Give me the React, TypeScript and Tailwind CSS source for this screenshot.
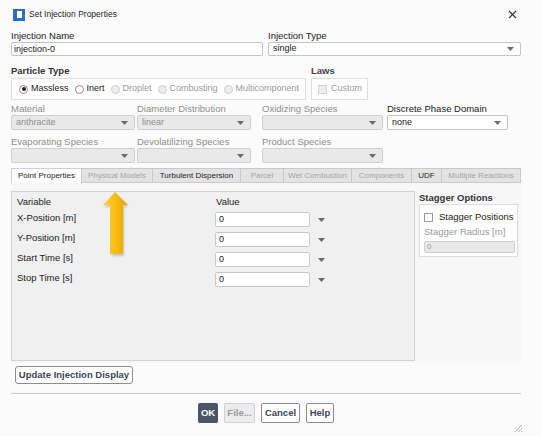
import React from 'react';

const font = { fontFamily: '"Liberation Sans", Arial, sans-serif' };

const Caret = ({ className = '' }: { className?: string }) => (
  <svg width="7" height="4" viewBox="0 0 7 4" className={className}>
    <path d="M0 0h7L3.5 4z" fill="#6b6b6b" />
  </svg>
);

const Select = ({ value, width, disabled }: { value?: string; width: string; disabled?: boolean }) => (
  <div
    className={`${width} h-[15px] flex items-center justify-between pl-[4px] pr-[6px] rounded-[2px] border text-[9px] ${
      disabled ? 'bg-[#e9e9e9] border-[#cfcfcf] text-[#8e8e8e]' : 'bg-white border-[#c4c4c4] text-[#222]'
    }`}
  >
    <span>{value}</span>
    <Caret />
  </div>
);

const Radio = ({ label, checked, disabled }: { label: string; checked?: boolean; disabled?: boolean }) => (
  <div className="flex items-center gap-[3px]">
    <span
      className={`w-[9px] h-[9px] rounded-full border flex items-center justify-center ${
        disabled ? 'border-[#cfcfcf] bg-[#ececec]' : 'border-[#8a8a8a] bg-white'
      }`}
    >
      {checked && <span className="w-[4px] h-[4px] rounded-full bg-[#222]" />}
    </span>
    <span className={disabled ? 'text-[#9a9a9a]' : 'text-[#222]'}>{label}</span>
  </div>
);

const tabs = [
  { name: 'Point Properties', w: 'w-[70px]', active: true },
  { name: 'Physical Models', w: 'w-[71px]', dim: true },
  { name: 'Turbulent Dispersion', w: 'w-[88px]' },
  { name: 'Parcel', w: 'w-[43px]', dim: true },
  { name: 'Wet Combustion', w: 'w-[68px]', dim: true },
  { name: 'Components', w: 'w-[60px]', dim: true },
  { name: 'UDF', w: 'w-[30px]' },
  { name: 'Multiple Reactions', w: 'w-[80px]', dim: true },
];

const rows = ['X-Position [m]', 'Y-Position [m]', 'Start Time [s]', 'Stop Time [s]'];

export default function App() {
  return (
    <div className="relative w-[542px] h-[436px] bg-[#fbfbfb] overflow-hidden" style={font}>
      {/* title bar */}
      <div className="h-[29px] flex items-center pl-[13px] pr-[25px]">
        <div className="w-[12px] h-[12px] bg-[#2c6fc0] flex items-center justify-center">
          <div className="w-[5px] h-[7px] bg-white" />
        </div>
        <span className="ml-[4px] text-[8.5px] text-[#222]">Set Injection Properties</span>
        <span className="ml-auto">
          <svg width="9" height="9" viewBox="0 0 9 9">
            <path d="M1 1l7 7M8 1L1 8" stroke="#333" strokeWidth="1.1" />
          </svg>
        </span>
      </div>

      <div className="pl-[11px] w-[521px]">
        {/* name / type */}
        <div className="flex gap-[5px]">
          <div className="w-[252px]">
            <div className="h-[13px] leading-[13px] text-[9.5px] text-[#222]">Injection Name</div>
            <div className="h-[14px] border border-[#c4c4c4] rounded-[2px] bg-white pl-[2px] text-[9px] leading-[12px] text-[#222]">
              injection-0
            </div>
          </div>
          <div className="w-[253px]">
            <div className="h-[13px] leading-[13px] text-[9.5px] text-[#222]">Injection Type</div>
            <Select value="single" width="w-[253px] !h-[14px]" />
          </div>
        </div>

        {/* particle type / laws */}
        <div className="flex gap-[5px] mt-[8px]">
          <div>
            <div className="h-[13px] leading-[13px] text-[9.5px] font-bold text-[#333]">Particle Type</div>
            <div className="mt-[1px] w-[295px] h-[22px] border border-[#dedede] bg-white flex items-center gap-[6px] pl-[7px] text-[9px]">
              <Radio label="Massless" checked />
              <Radio label="Inert" />
              <Radio label="Droplet" disabled />
              <Radio label="Combusting" disabled />
              <Radio label="Multicomponent" disabled />
            </div>
          </div>
          <div>
            <div className="h-[13px] leading-[13px] text-[9.5px] font-bold text-[#444]">Laws</div>
            <div className="mt-[1px] w-[57px] h-[22px] border border-[#dedede] bg-white flex items-center gap-[4px] pl-[6px] text-[9px] text-[#9a9a9a]">
              <span className="w-[9px] h-[9px] border border-[#cfcfcf] bg-[#ececec]" />
              Custom
            </div>
          </div>
        </div>

        {/* material row */}
        <div className="flex mt-[2px] text-[9.5px]">
          <div className="w-[126px]">
            <div className="h-[13px] leading-[13px] text-[#8e8e8e]">Material</div>
            <Select value="anthracite" width="w-[124px]" disabled />
          </div>
          <div className="w-[125px]">
            <div className="h-[13px] leading-[13px] text-[#8e8e8e]">Diameter Distribution</div>
            <Select value="linear" width="w-[114px]" disabled />
          </div>
          <div className="w-[125px]">
            <div className="h-[13px] leading-[13px] text-[#8e8e8e]">Oxidizing Species</div>
            <Select width="w-[121px]" disabled />
          </div>
          <div className="flex-1">
            <div className="h-[13px] leading-[13px] text-[#222]">Discrete Phase Domain</div>
            <Select value="none" width="w-[121px]" />
          </div>
        </div>

        <div className="flex mt-[5px] text-[9.5px]">
          <div className="w-[126px]">
            <div className="h-[13px] leading-[13px] text-[#8e8e8e]">Evaporating Species</div>
            <Select width="w-[124px]" disabled />
          </div>
          <div className="w-[125px]">
            <div className="h-[13px] leading-[13px] text-[#8e8e8e]">Devolatilizing Species</div>
            <Select width="w-[114px]" disabled />
          </div>
          <div className="w-[125px]">
            <div className="h-[13px] leading-[13px] text-[#8e8e8e]">Product Species</div>
            <Select width="w-[121px]" disabled />
          </div>
        </div>

        {/* tabs */}
        <div className="flex mt-[5px] h-[15px]">
          {tabs.map((t) => (
            <div
              key={t.name}
              className={`${t.w} h-full flex items-center justify-center border-t border-l border-r-0 text-[8px] ${
                t.active ? 'bg-white border-[#cfcfcf]' : 'bg-[#e3e3e3] border-[#c9c9c9] border-b'
              } ${t.dim ? 'text-[#a3a3a3]' : 'text-[#222]'} last:border-r`}
            >
              {t.name}
            </div>
          ))}
        </div>

        {/* tab body */}
        <div className="h-[180px] bg-[#f7f7f7] pt-[8px] flex">
          <div className="w-[404px] h-[170px] bg-[#f0f0f0] border border-[#d2d2d2] pl-[5px] pt-[3px] text-[9.5px] text-[#222]">
            <div className="flex h-[13px] leading-[13px]">
              <span className="w-[198px]">Variable</span>
              <span className="pl-[1px]">Value</span>
            </div>
            <div className="mt-[4px] flex flex-col gap-[5px]">
              {rows.map((r) => (
                <div key={r} className="flex items-center h-[15px]">
                  <span className="w-[198px] -mt-[3px]">{r}</span>
                  <div className="w-[95px] h-[15px] bg-white border border-[#c9c9c9] rounded-[2px] pl-[3px] text-[9px] leading-[13px]">
                    0
                  </div>
                  <Caret className="ml-[8px]" />
                </div>
              ))}
            </div>
          </div>
          <div className="pl-[4px]">
            <div className="h-[13px] leading-[13px] text-[9.5px] font-bold text-[#333]">Stagger Options</div>
            <div className="w-[99px] h-[53px] border border-[#dddddd] bg-white pl-[4px] pt-[5px]">
              <div className="flex items-center gap-[6px]">
                <span className="w-[9px] h-[9px] border border-[#9a9a9a] bg-white" />
                <span className="text-[9.5px] text-[#222]">Stagger Positions</span>
              </div>
              <div className="mt-[2px] text-[9.5px] leading-[12px] text-[#9a9a9a]">Stagger Radius [m]</div>
              <div className="mt-[3px] w-[91px] h-[12px] bg-[#e9e9e9] border border-[#cdcdcd] rounded-[2px] pl-[2px] text-[8px] leading-[10px] text-[#9a9a9a]">
                0
              </div>
            </div>
          </div>
        </div>

        <button className="mt-[3px] ml-[4px] w-[118px] h-[18px] border border-[#8c8c8c] rounded-[3px] bg-white text-[9.5px] font-bold text-[#3c4656] flex items-center justify-center">
          Update Injection Display
        </button>

        <div className="mt-[9px] border-t border-[#c8c8c8]" />

        <div className="mt-[9px] flex justify-center gap-[6px] text-[9.5px] font-bold">
          <button className="w-[20px] h-[20px] rounded-[2px] bg-[#4a5666] text-white">OK</button>
          <button className="w-[31px] h-[20px] rounded-[2px] border border-[#d0d0d0] bg-[#ececec] text-[#9a9a9a]">File...</button>
          <button className="w-[39px] h-[20px] rounded-[2px] border border-[#8c8c8c] bg-white text-[#3c4656]">Cancel</button>
          <button className="w-[28px] h-[20px] rounded-[2px] border border-[#8c8c8c] bg-white text-[#3c4656]">Help</button>
        </div>
      </div>

      {/* resize grip */}
      <svg className="absolute left-[514px] top-[424px]" width="9" height="9" viewBox="0 0 9 9">
        <path d="M8 1L1 8M8 4L4 8M8 7L7 8" stroke="#a0a0a0" strokeWidth="0.8" />
      </svg>

      {/* yellow annotation arrow */}
      <svg className="absolute left-[100px] top-[188px]" width="36" height="72" viewBox="0 0 36 72">
        <defs>
          <linearGradient id="ag" x1="0" x2="1" y1="0" y2="0">
            <stop offset="0" stopColor="#ffd23a" />
            <stop offset="0.6" stopColor="#f6b80e" />
            <stop offset="1" stopColor="#e0a000" />
          </linearGradient>
          <filter id="sh" x="-30%" y="-20%" width="160%" height="140%">
            <feGaussianBlur stdDeviation="1.2" />
          </filter>
        </defs>
        <path d="M16 6L28 19H24V68H12V19H4Z" fill="#000" opacity="0.18" filter="url(#sh)" />
        <path d="M15 4L28 17H23V66H10V17H3Z" fill="url(#ag)" />
      </svg>
    </div>
  );
}
